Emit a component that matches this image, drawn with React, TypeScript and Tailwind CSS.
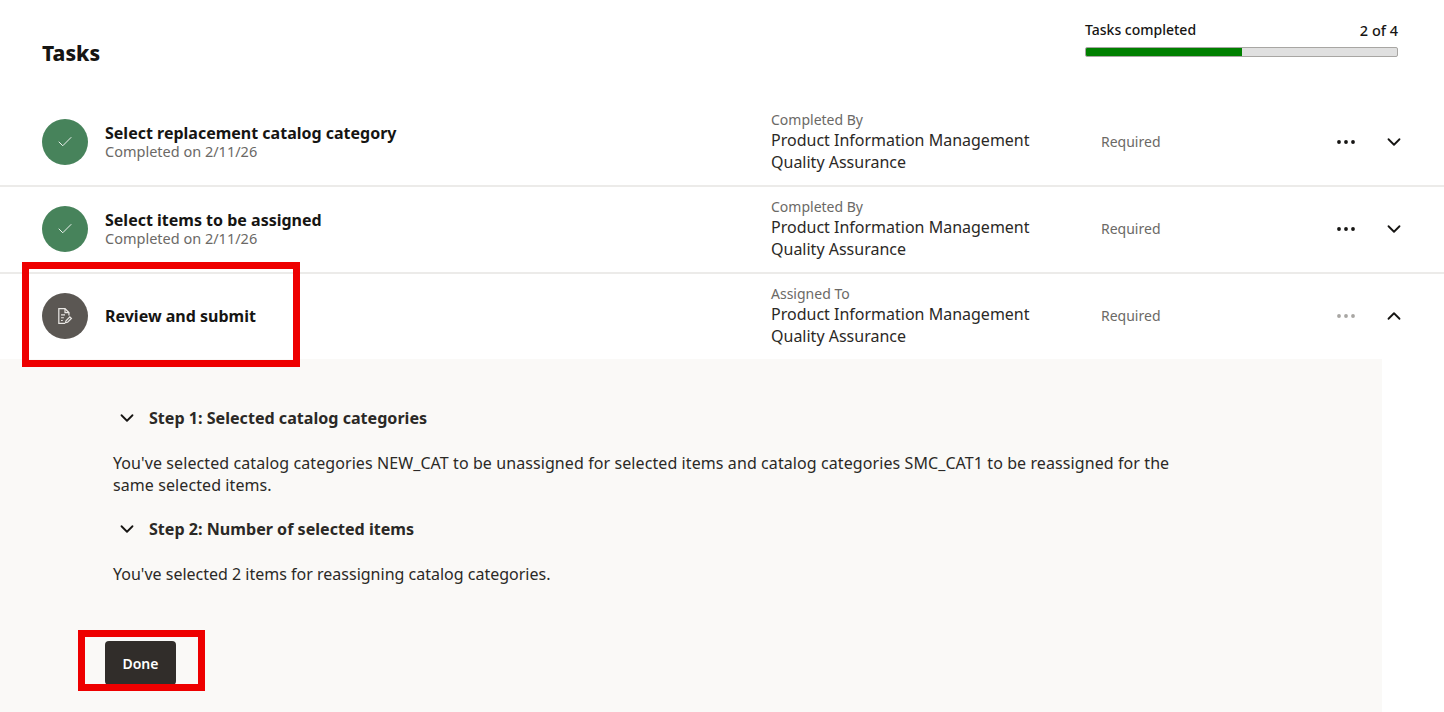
import { Check, ChevronDown, ChevronUp, Ellipsis } from "lucide-react";

const font = "font-['Noto_Sans','Liberation_Sans',sans-serif]";

function ReviewIcon() {
  return (
    <svg width="18" height="18" viewBox="0 0 16 16" fill="none" stroke="#e8e6e3" strokeWidth="1.1">
      <path d="M8 14.5H2.5V1.5h5.5L11.5 5v2.5" />
      <path d="M8 1.5V5h3.5" />
      <path d="M4.5 7h3.5M4.5 9.5h2.5M4.5 12h1.5" strokeWidth="1" />
      <path d="M8.5 14l.4-1.8 3.4-3.4 1.4 1.4-3.4 3.4z" />
    </svg>
  );
}

function TaskRow({
  title,
  sub,
  label,
  status,
  open,
}: {
  title: string;
  sub?: string;
  label: string;
  status: "done" | "active";
  open?: boolean;
}) {
  const done = status === "done";
  return (
    <div className={`flex h-[87px] items-center pl-[42px] ${done ? "shadow-[0_2px_0_#ecebe9]" : ""}`}>
      <div
        className={`flex h-[46px] w-[46px] shrink-0 items-center justify-center rounded-full ${
          done ? "bg-[#47835b]" : "bg-[#5b5753]"
        }`}
      >
        {done ? <Check size={18} color="#ffffff" strokeWidth={1.2} /> : <ReviewIcon />}
      </div>
      <div className="ml-[17px] w-[666px]">
        <div className="text-[16px] leading-[20px] font-bold text-[#161513]">{title}</div>
        {sub && <div className="text-[14.5px] leading-[17px] text-[#6b6966]">{sub}</div>}
      </div>
      <div className="w-[330px]">
        <div className="mb-[1px] text-[14px] leading-[17px] text-[#6b6966]">{label}</div>
        <div className="text-[16px] leading-[22px] text-[#2b2926]">
          Product Information Management
          <br />
          Quality Assurance
        </div>
      </div>
      <div className="w-[233px] text-[14px] text-[#6b6966]">Required</div>
      <Ellipsis size={24} color={open ? "#a8a6a3" : "#161513"} strokeWidth={1.8} />
      <div className="ml-[25px]">
        {open ? (
          <ChevronUp size={22} color="#161513" strokeWidth={2} />
        ) : (
          <ChevronDown size={22} color="#161513" strokeWidth={2} />
        )}
      </div>
    </div>
  );
}

function StepHeading({ children }: { children: string }) {
  return (
    <div className="flex items-center pl-[116px] text-[16.1px] leading-[22px] font-bold text-[#2b2926]">
      <ChevronDown size={22} color="#161513" strokeWidth={2} className="mr-[11px]" />
      {children}
    </div>
  );
}

export default function App() {
  return (
    <div className={`relative h-[712px] w-[1444px] overflow-hidden bg-white ${font}`}>
      <div className="flex h-[98px] justify-between pl-[42px]">
        <h1 className="mt-[39px] text-[21px] leading-[28px] font-extrabold text-[#161513]">Tasks</h1>
        <div className="mt-[20px] mr-[46px] w-[313px]">
          <div className="flex justify-between text-[14px] leading-[20px] font-medium text-[#161513]">
            <span>Tasks completed</span>
            <span className="text-[14.5px]">2 of 4</span>
          </div>
          <div className="mt-[7px] h-[10px] overflow-hidden rounded-[2px] border border-[#a8a6a3] bg-[#e0e0e0]">
            <div className="h-full w-1/2 bg-[#008000]" />
          </div>
        </div>
      </div>

      <TaskRow title="Select replacement catalog category" sub="Completed on 2/11/26" label="Completed By" status="done" />
      <TaskRow title="Select items to be assigned" sub="Completed on 2/11/26" label="Completed By" status="done" />
      <TaskRow title="Review and submit" label="Assigned To" status="active" open />

      <div className="h-[353px] w-[1382px] bg-[#faf9f7] pt-[48px]">
        <StepHeading>Step 1: Selected catalog categories</StepHeading>
        <p className="mt-[23px] w-[1180px] pl-[113px] text-[16px] leading-[22px] tracking-[0.09px] text-[#2b2926]">
          You've selected catalog categories NEW_CAT to be unassigned for selected items and catalog categories
          SMC_CAT1 to be reassigned for the same selected items.
        </p>
        <div className="mt-[22px]">
          <StepHeading>Step 2: Number of selected items</StepHeading>
        </div>
        <p className="mt-[23px] pl-[113px] text-[16px] leading-[22px] text-[#2b2926]">
          You've selected 2 items for reassigning catalog categories.
        </p>
        <button className="mt-[56px] ml-[105px] h-[44px] w-[71px] rounded-[4px] bg-[#312d2a] text-[14px] font-semibold text-white">
          Done
        </button>
      </div>

      {/* red annotation boxes from the screenshot */}
      <div className="absolute top-[262px] left-[22px] h-[105px] w-[278px] border-[7px] border-[#ee0000]" />
      <div className="absolute top-[630px] left-[78px] h-[61px] w-[127px] border-[7px] border-[#ee0000]" />
    </div>
  );
}
